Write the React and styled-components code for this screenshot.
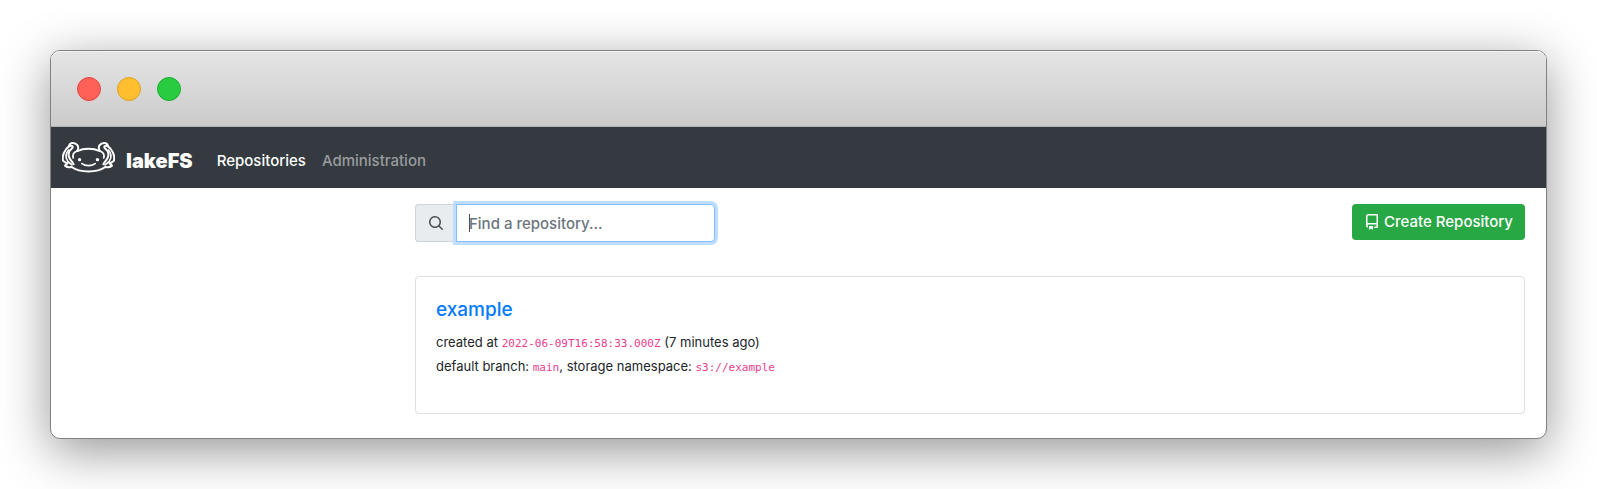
import React from 'react';
import styled, { createGlobalStyle } from 'styled-components';

const GlobalStyle = createGlobalStyle`
  *, *::before, *::after { box-sizing: border-box; }
  body {
    margin: 0;
    background: #fff;
    color: #212529;
    font-family: Inter, "Liberation Sans", sans-serif;
    font-size: 15px;
    line-height: 24px;
  }
`;

const Desktop = styled.div`
  padding: 50px;
  overflow: hidden;
`;

const Window = styled.div`
  border: 1px solid #808182;
  border-radius: 10px;
  background: #fff;
  box-shadow: 0 12px 50px rgba(0, 0, 0, 0.42);
`;

const TitleBar = styled.div`
  display: flex;
  align-items: center;
  gap: 16px;
  height: 76px;
  padding: 0 26px;
  border-radius: 9px 9px 0 0;
  border-bottom: 1px solid #b0b1b1;
  background: linear-gradient(#e5e5e5, #cbcbcb);
  box-shadow: inset 0 1px 0 #f3f3f3;
`;

const Light = styled.span`
  width: 24px;
  height: 24px;
  border-radius: 50%;
  border: 1px solid ${(p) => p.$edge};
  background: ${(p) => p.$fill};
`;

const Navbar = styled.nav`
  display: flex;
  align-items: center;
  height: 61px;
  padding: 0 11px;
  background: #343a40;
`;

const Brand = styled.a`
  display: flex;
  align-items: center;
  gap: 11px;
  margin-right: 16px;
  color: #fff;
  font-size: 20px;
  font-weight: 900;
  text-decoration: none;
  span { padding-top: 6px; }
`;

const NavLink = styled.a`
  padding: 6px 8px 0;
  color: ${(p) => (p.$active ? '#fff' : '#999c9f')};
  font-weight: 500;
  text-decoration: none;
`;

const Content = styled.main`
  max-width: 1131px;
  margin-left: auto;
  padding: 16px 21px 24px 0;
`;

const Toolbar = styled.div`
  display: flex;
  align-items: flex-start;
  justify-content: space-between;
  margin-bottom: 34px;
`;

const SearchGroup = styled.form`
  display: flex;
  width: 300px;
  height: 38px;
`;

const SearchLabel = styled.label`
  display: flex;
  align-items: center;
  justify-content: center;
  width: 41px;
  border: 1px solid #ced4da;
  border-right: 0;
  border-radius: 4px 0 0 4px;
  background: #e9ecef;
  color: #495057;
`;

const SearchField = styled.div`
  position: relative;
  flex: 1;
`;

const SearchInput = styled.input`
  width: 100%;
  height: 100%;
  padding: 0 12px;
  border: 1px solid #80bdff;
  border-radius: 0 4px 4px 0;
  outline: 0;
  box-shadow: 0 0 0 3px #bfdeff;
  color: #495057;
  font: inherit;
  font-weight: 500;
  &::placeholder { color: #6c757d; opacity: 1; }
`;

const Caret = styled.span`
  position: absolute;
  top: 10px;
  left: 13px;
  width: 1px;
  height: 18px;
  background: #495057;
`;

const CreateButton = styled.button`
  display: flex;
  align-items: center;
  gap: 4px;
  height: 36px;
  padding: 0 12px;
  border: 0;
  border-radius: 4px;
  background: #28a745;
  color: #fff;
  font: inherit;
  font-weight: 500;
`;

const Card = styled.article`
  min-height: 138px;
  padding: 20px;
  border: 1px solid #dfdfdf;
  border-radius: 4px;
`;

const RepoName = styled.h5`
  margin: 0 0 7px;
  font-size: 19px;
  font-weight: 500;
  line-height: 26px;
  a { color: #007bff; text-decoration: none; }
`;

const Detail = styled.p`
  margin: 0;
  font-size: 13px;
  line-height: 24px;
`;

const Code = styled.code`
  color: #e83e8c;
  font-family: "DejaVu Sans Mono", monospace;
  font-size: 11px;
  line-height: 12px;
`;

const AxolotlArm = () => (
  <>
    <path d="M46 27 C54 13 44 2 31 3 C24 4 21 8 22 12 C30 9 35 13 31 18 C20 27 17 38 23 49 C26 56 33 60 35 67" />
    <path d="M22 12 C8 22 0 40 3 56 C8 61 12 63 17 64 C12 68 10 70 9 71 C15 76 22 77 29 75" />
    <path d="M46 27 C35 31 31 38 34 48 M20 24 C11 34 10 47 17 57 C21 62 26 65 30 69" strokeWidth="5" />
  </>
);

const AxolotlLogo = () => (
  <svg width="53" height="31" viewBox="0 0 160 93" fill="none" stroke="#fff" strokeWidth="6" strokeLinecap="round" strokeLinejoin="round" aria-hidden="true">
    <AxolotlArm />
    <g transform="matrix(-1 0 0 1 160 0)">
      <AxolotlArm />
    </g>
    <path d="M46 27 C66 18 94 18 114 27" />
    <path d="M29 75 C54 93 106 93 131 75" />
    <path d="M60 65 C70 73 90 73 100 65" strokeWidth="5" />
    <circle cx="53" cy="53" r="5" fill="#fff" stroke="none" />
    <circle cx="107" cy="53" r="5" fill="#fff" stroke="none" />
  </svg>
);

const SearchIcon = () => (
  <svg width="16" height="16" viewBox="0 0 16 16" fill="currentColor" aria-hidden="true">
    <path fillRule="evenodd" d="M11.5 7a4.499 4.499 0 11-8.998 0A4.499 4.499 0 0111.5 7zm-.82 4.74a6 6 0 111.06-1.06l3.04 3.04a.75.75 0 11-1.06 1.06l-3.04-3.04z" />
  </svg>
);

const RepoIcon = () => (
  <svg width="16" height="16" viewBox="0 0 16 16" fill="currentColor" aria-hidden="true">
    <path fillRule="evenodd" d="M2 2.5A2.5 2.5 0 014.5 0h8.75a.75.75 0 01.75.75v12.5a.75.75 0 01-.75.75h-2.5a.75.75 0 110-1.5h1.75v-2h-8a1 1 0 00-.714 1.7.75.75 0 01-1.072 1.05A2.495 2.495 0 012 11.5v-9zm10.5-1V9h-8c-.356 0-.694.074-1 .208V2.5a1 1 0 011-1h8zM5 12.25v3.25a.25.25 0 00.4.2l1.45-1.087a.25.25 0 01.3 0L8.6 15.7a.25.25 0 00.4-.2v-3.25a.25.25 0 00-.25-.25h-3.5a.25.25 0 00-.25.25z" />
  </svg>
);

export default function App() {
  return (
    <Desktop>
      <GlobalStyle />
      <Window>
        <TitleBar>
          <Light $fill="#ff6159" $edge="#e2463f" />
          <Light $fill="#ffbf2f" $edge="#dfa023" />
          <Light $fill="#29cc41" $edge="#1dad2b" />
        </TitleBar>
        <Navbar>
          <Brand href="#home">
            <AxolotlLogo />
            <span>lakeFS</span>
          </Brand>
          <NavLink href="#repositories" $active>Repositories</NavLink>
          <NavLink href="#administration">Administration</NavLink>
        </Navbar>
        <Content>
          <Toolbar>
            <SearchGroup role="search">
              <SearchLabel htmlFor="repo-search" aria-label="Search repositories">
                <SearchIcon />
              </SearchLabel>
              <SearchField>
                <SearchInput id="repo-search" type="text" placeholder="Find a repository..." />
                <Caret />
              </SearchField>
            </SearchGroup>
            <CreateButton type="button">
              <RepoIcon />
              Create Repository
            </CreateButton>
          </Toolbar>
          <Card>
            <RepoName><a href="#example">example</a></RepoName>
            <Detail>created at <Code>2022-06-09T16:58:33.000Z</Code> (7 minutes ago)</Detail>
            <Detail>default branch: <Code>main</Code>, storage namespace: <Code>s3://example</Code></Detail>
          </Card>
        </Content>
      </Window>
    </Desktop>
  );
}
